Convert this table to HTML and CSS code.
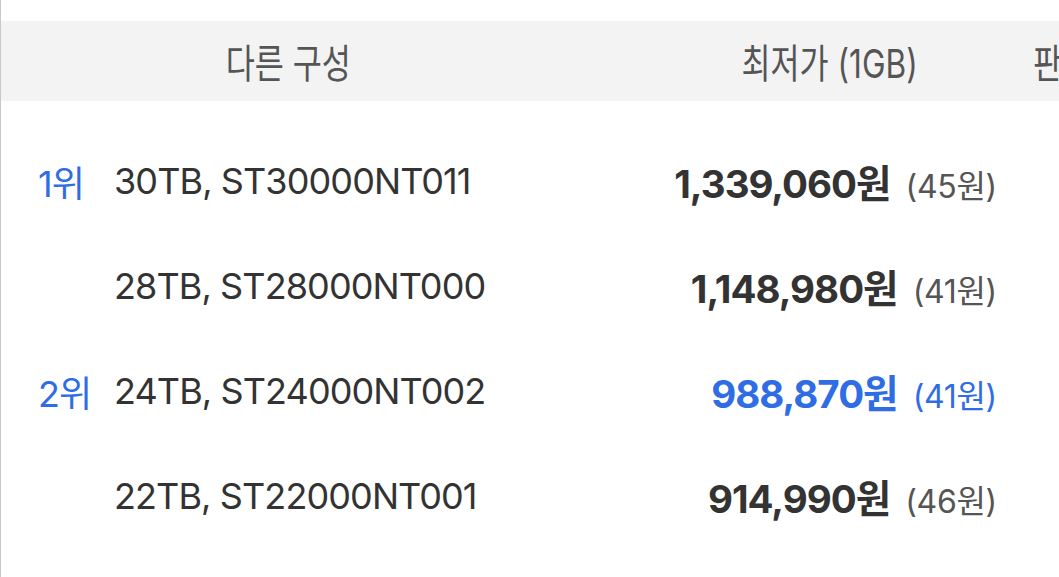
FILE: index.html
```html
<!DOCTYPE html>
<html lang="ko">
<head>
<meta charset="utf-8">
<link rel="stylesheet" href="styles.css">
</head>
<body>
<div class="table">
  <div class="head">
    <div class="h-name"><span class="cond">다른 구성</span></div>
    <div class="h-price"><span class="cond">최저가 (1GB)</span></div>
    <div class="h-shop"><span class="cond left">판매처</span></div>
  </div>
  <div class="rows">
    <div class="row">
      <div class="rank">1위</div>
      <div class="name">30TB, ST30000NT011</div>
      <div class="price"><b>1,339,060원</b> <span class="unit">(45원)</span></div>
    </div>
    <div class="row">
      <div class="rank"></div>
      <div class="name">28TB, ST28000NT000</div>
      <div class="price"><b>1,148,980원</b> <span class="unit">(41원)</span></div>
    </div>
    <div class="row">
      <div class="rank">2위</div>
      <div class="name">24TB, ST24000NT002</div>
      <div class="price best"><b>988,870원</b> <span class="unit">(41원)</span></div>
    </div>
    <div class="row">
      <div class="rank"></div>
      <div class="name">22TB, ST22000NT001</div>
      <div class="price"><b>914,990원</b> <span class="unit">(46원)</span></div>
    </div>
  </div>
</div>
</body>
</html>
```
FILE: styles.css
```css
html, body {
  margin: 0;
  padding: 0;
  background: #fff;
  overflow: hidden;
}
body {
  font-family: "Inter", "Noto Sans CJK KR", sans-serif;
  color: #333;
}
.table {
  border-left: 1px solid #c8c8c8;
  padding-top: 21px;
  height: 556px;
}
.head {
  height: 80px;
  background: #f3f3f3;
  display: flex;
  align-items: center;
  font-size: 40px;
  color: #555;
  white-space: nowrap;
  overflow: hidden;
}
.cond {
  display: inline-block;
  transform: scaleX(0.79);
}
.cond.left {
  transform-origin: left center;
}
.h-name {
  width: 575px;
  flex: none;
  text-align: center;
}
.h-price {
  width: 457px;
  flex: none;
  box-sizing: border-box;
  padding-left: 51px;
  text-align: center;
}
.h-shop {
  flex: none;
}
.rows {
  padding-top: 27px;
}
.row {
  height: 105px;
  display: flex;
  align-items: center;
  font-size: 36px;
}
.rank {
  width: 76px;
  padding-left: 37px;
  color: #2f6de5;
  letter-spacing: -1px;
}
.name {
  width: 500px;
  letter-spacing: -0.9px;
  color: #333;
}
.price {
  width: 383px;
  text-align: right;
  white-space: nowrap;
}
.price b {
  font-weight: 700;
  font-size: 38.5px;
  color: #333;
  letter-spacing: -1px;
}
.price .unit {
  color: #555;
  font-size: 32px;
  margin-left: 5px;
  letter-spacing: -0.3px;
}
.price.best b, .price.best .unit {
  color: #2f6de5;
}
```
